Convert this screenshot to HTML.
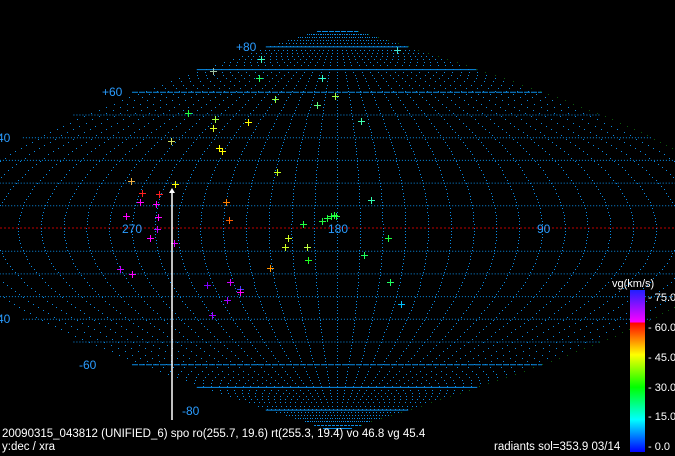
<!DOCTYPE html>
<html><head><meta charset="utf-8"><style>
html,body{margin:0;padding:0;background:#000;width:675px;height:456px;overflow:hidden}
svg{display:block}
text{font-family:"Liberation Sans",sans-serif}
</style></head><body>
<svg id="s" width="675" height="456" xmlns="http://www.w3.org/2000/svg">
<defs>
<linearGradient id="cb" x1="0" y1="1" x2="0" y2="0">
<stop offset="0" stop-color="#0000ff"/>
<stop offset="0.2" stop-color="#00ffff"/>
<stop offset="0.4" stop-color="#00ff00"/>
<stop offset="0.6" stop-color="#ffff00"/>
<stop offset="0.8" stop-color="#ff0000"/>
<stop offset="0.8" stop-color="#ff00ff"/>
<stop offset="1" stop-color="#2020ff"/>
</linearGradient>
</defs>
<rect width="675" height="456" fill="#000"/>
<g id="grid"></g>
<g id="pts"></g>
<g fill="#2a9cff" font-size="12">
<text x="236" y="51">+80</text>
<text x="102" y="96">+60</text>
<text x="-3" y="142">40</text>
<text x="122" y="233">270</text>
<text x="328" y="233">180</text>
<text x="537" y="233">90</text>
<text x="-3" y="323">40</text>
<text x="79" y="369">-60</text>
<text x="182" y="415">-80</text>
</g>
<line x1="172" y1="192" x2="172" y2="420" stroke="#fff" stroke-width="1.5"/>
<path d="M172 188 L169 193 L175 193 Z" fill="#fff"/>
<rect x="630" y="290" width="15" height="162" fill="url(#cb)"/>
<g fill="#fff" font-size="11">
<text x="612" y="287">vg(km/s)</text>
<text x="648" y="301">- 75.0</text>
<text x="648" y="331">- 60.0</text>
<text x="648" y="361">- 45.0</text>
<text x="648" y="391">- 30.0</text>
<text x="648" y="420">- 15.0</text>
<text x="648" y="450">-  0.0</text>
<text x="2" y="437" font-size="11.5">20090315_043812 (UNIFIED_6) spo ro(255.7, 19.6) rt(255.3, 19.4) vo 46.8 vg 45.4</text>
<text x="2" y="450" font-size="11.5">y:dec / xra</text>
<text x="494" y="450" font-size="11.5">radiants sol=353.9 03/14</text>
</g>
</svg>
<script>
var g=document.getElementById('grid'),P=document.getElementById('pts');
var cx=337,cy=228,k=2.278,ky=2.27,col="#0a8ce6",h="";
function X(ra,d){return cx-(ra-180)*Math.cos(d*Math.PI/180)*k}
function Y(d){return cy-d*ky}
for(var d=-80;d<=80;d+=10){var w=180*Math.cos(d*Math.PI/180)*k,y=Y(d);
 if(d==0){h+='<line x1="0" y1="'+y+'" x2="675" y2="'+y+'" stroke="#c00000" stroke-dasharray="2,2"/>';continue}
 var a=Math.abs(d),da=(a>=70)?'20,0':(a==60?'6,1':'1,2');
 h+='<line x1="'+(cx-w)+'" y1="'+(y+0.5)+'" x2="'+(cx+w)+'" y2="'+(y+0.5)+'" stroke="'+col+'" stroke-width="1" stroke-dasharray="'+da+'"/>';}
for(var ra=0;ra<360;ra+=10){for(var d=-88;d<=88;d+=1.4){var x=X(ra,d);if(x<0||x>675)continue;
 h+='<rect x="'+Math.round(x)+'" y="'+Math.round(Y(d))+'" width="1" height="1" fill="'+(ra==0?'#0a5a0a':col)+'"/>';}}
g.innerHTML=h;
var pts=[[397,50,'#40e0d0'],[261,59,'#40ffc0'],[213,71,'#a0c0a0'],[259,78,'#20ff60'],[322,78,'#30ffd0'],[275,99,'#90ff40'],[317,105,'#60ff80'],[335,96,'#a0ff40'],[188,113,'#20ff40'],[215,119,'#a0ff40'],[248,122,'#ffff00'],[213,128,'#e0ff20'],[171,141,'#d0e060'],[219,148,'#ffff00'],[222,151,'#ffff00'],[361,121,'#40ffb0'],[277,172,'#c0ff20'],[131,181,'#f0b040'],[175,184,'#ffff00'],[142,193,'#ff2020'],[159,194,'#ff2020'],[140,202,'#ff00ff'],[156,204,'#ff00ff'],[126,216,'#ff00ff'],[158,217,'#ff00ff'],[157,229,'#c000ff'],[150,238,'#ff00ff'],[174,243,'#e000ff'],[226,202,'#ff8000'],[229,220,'#ff6000'],[303,224,'#20ff40'],[322,221,'#20ff40'],[327,218,'#20ff40'],[331,216,'#20ff40'],[334,215,'#20ff40'],[336,216,'#20ff40'],[371,200,'#30ffb0'],[388,238,'#20ff40'],[288,238,'#d0ff20'],[285,247,'#d0ff20'],[307,247,'#c0ff40'],[308,260,'#20ff20'],[364,255,'#20ff60'],[270,268,'#ff9000'],[120,269,'#c000ff'],[132,274,'#ff00ff'],[390,282,'#20ff60'],[207,285,'#8000ff'],[230,282,'#d000ff'],[240,289,'#4040ff'],[240,292,'#ff00ff'],[227,300,'#a000ff'],[212,315,'#a000ff'],[401,304,'#00c0ff']];
var s="";pts.forEach(function(p){s+='<path d="M'+(p[0]-3)+' '+(p[1]+0.5)+'h7M'+(p[0]+0.5)+' '+(p[1]-3)+'v7" stroke="'+p[2]+'" stroke-width="1"/>'});
P.innerHTML=s;
</script>
</body></html>
